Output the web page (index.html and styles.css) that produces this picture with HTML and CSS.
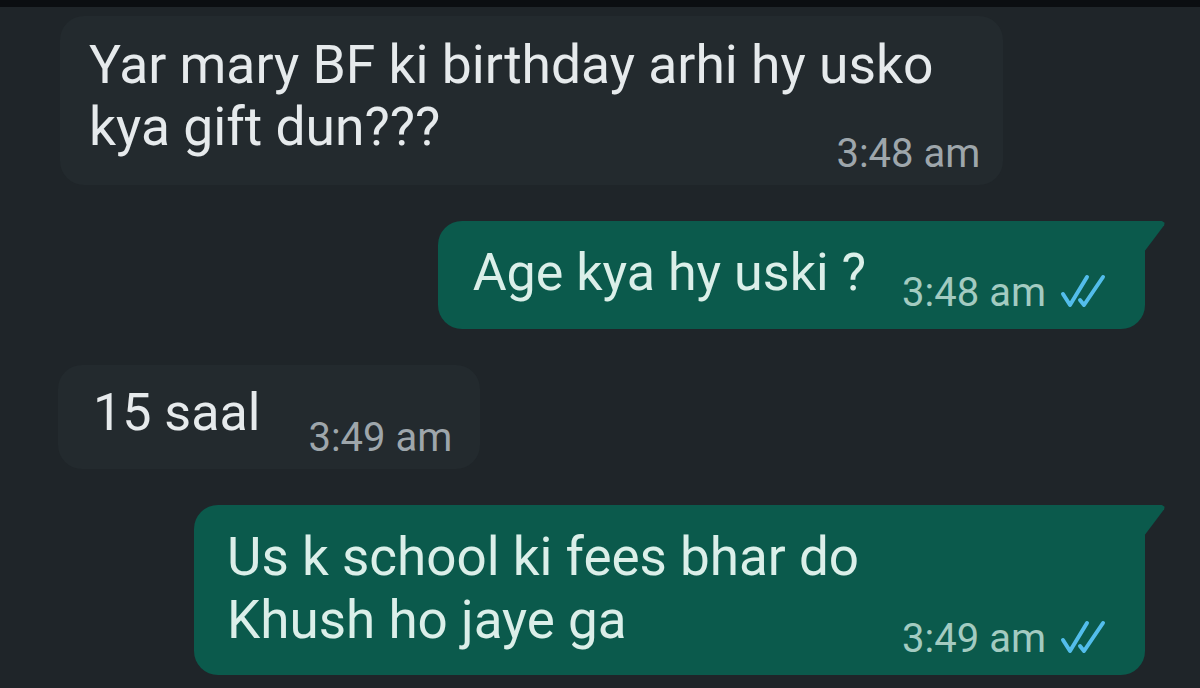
FILE: index.html
```html
<!DOCTYPE html>
<html>
<head>
<meta charset="utf-8">
<link rel="stylesheet" href="styles.css">
</head>
<body>
<div class="topbar"></div>
<div class="chat">
  <div class="bubble in first">
    <div class="text">Yar mary BF ki birthday arhi hy usko<br>kya gift dun???</div>
    <div class="meta">3:48 am</div>
  </div>
  <div class="bubble out second">
    <div class="text">Age kya hy uski ?</div>
    <div class="meta"><span class="time">3:48 am</span>
      <svg class="ticks" viewBox="0 0 52 36" width="52" height="36"><path d="M5 21 L12 32 L29 4 M22 27 L26 32 L45 4" fill="none" stroke="#53bdeb" stroke-width="4" stroke-linecap="round" stroke-linejoin="round"/></svg>
    </div>
  </div>
  <div class="bubble in third">
    <div class="text">15 saal</div>
    <div class="meta">3:49 am</div>
  </div>
  <div class="bubble out fourth">
    <div class="text">Us k school ki fees bhar do<br>Khush ho jaye ga</div>
    <div class="meta"><span class="time">3:49 am</span>
      <svg class="ticks" viewBox="0 0 52 36" width="52" height="36"><path d="M5 21 L12 32 L29 4 M22 27 L26 32 L45 4" fill="none" stroke="#53bdeb" stroke-width="4" stroke-linecap="round" stroke-linejoin="round"/></svg>
    </div>
  </div>
</div>
</body>
</html>
```
FILE: styles.css
```css
html, body {
  margin: 0;
  padding: 0;
  background: #1f2529;
  width: 1200px;
  height: 688px;
  overflow: hidden;
  font-family: Roboto, "Noto Sans", sans-serif;
}
.topbar {
  height: 7px;
  background: #0b0e11;
}
.chat {
  display: flex;
  flex-direction: column;
  gap: 36px;
  padding-top: 9px;
}
.bubble {
  position: relative;
  display: flex;
  align-items: flex-end;
  box-sizing: border-box;
  border-radius: 24px;
}
.bubble .text {
  font-size: 52px;
  line-height: 62px;
  white-space: nowrap;
}
.meta {
  display: flex;
  align-items: center;
  font-size: 40px;
  line-height: 40px;
  white-space: nowrap;
}
.in {
  align-self: flex-start;
  background: #232a2e;
  color: #e6eaec;
}
.in .meta { color: #9ea6ab; }
.out {
  align-self: flex-end;
  margin-right: 55px;
  background: #0b5a4c;
  color: #dbefe9;
  border-top-right-radius: 0;
}
.out::after {
  content: "";
  position: absolute;
  top: 0;
  right: -20px;
  width: 21px;
  height: 31px;
  background: #0b5a4c;
  clip-path: polygon(0 0, 85% 0, 98% 6%, 96% 14%, 0 100%);
}
.out .meta { color: #a3cbc1; }
.out .time { margin-right: 12px; }
.ticks { display: block; margin-top: -4px; }

.first {
  margin-left: 60px;
  padding: 18px 23px 11px 29px;
}
.first .text { margin-bottom: 16px; font-size: 53.4px; }
.first .meta { margin-left: -97px; }

.second {
  padding: 21px 35px 16px 35px;
}
.second .text { margin-bottom: 9px; margin-right: 36px; }

.third {
  margin-left: 58px;
  padding: 17px 28px 11px 35px;
}
.third .text { margin-bottom: 14px; margin-right: 48px; }

.fourth {
  padding: 21px 35px 16px 33px;
}
.fourth .text { font-size: 53px; line-height: 63px; margin-bottom: 7px; margin-right: 43px; }
```
